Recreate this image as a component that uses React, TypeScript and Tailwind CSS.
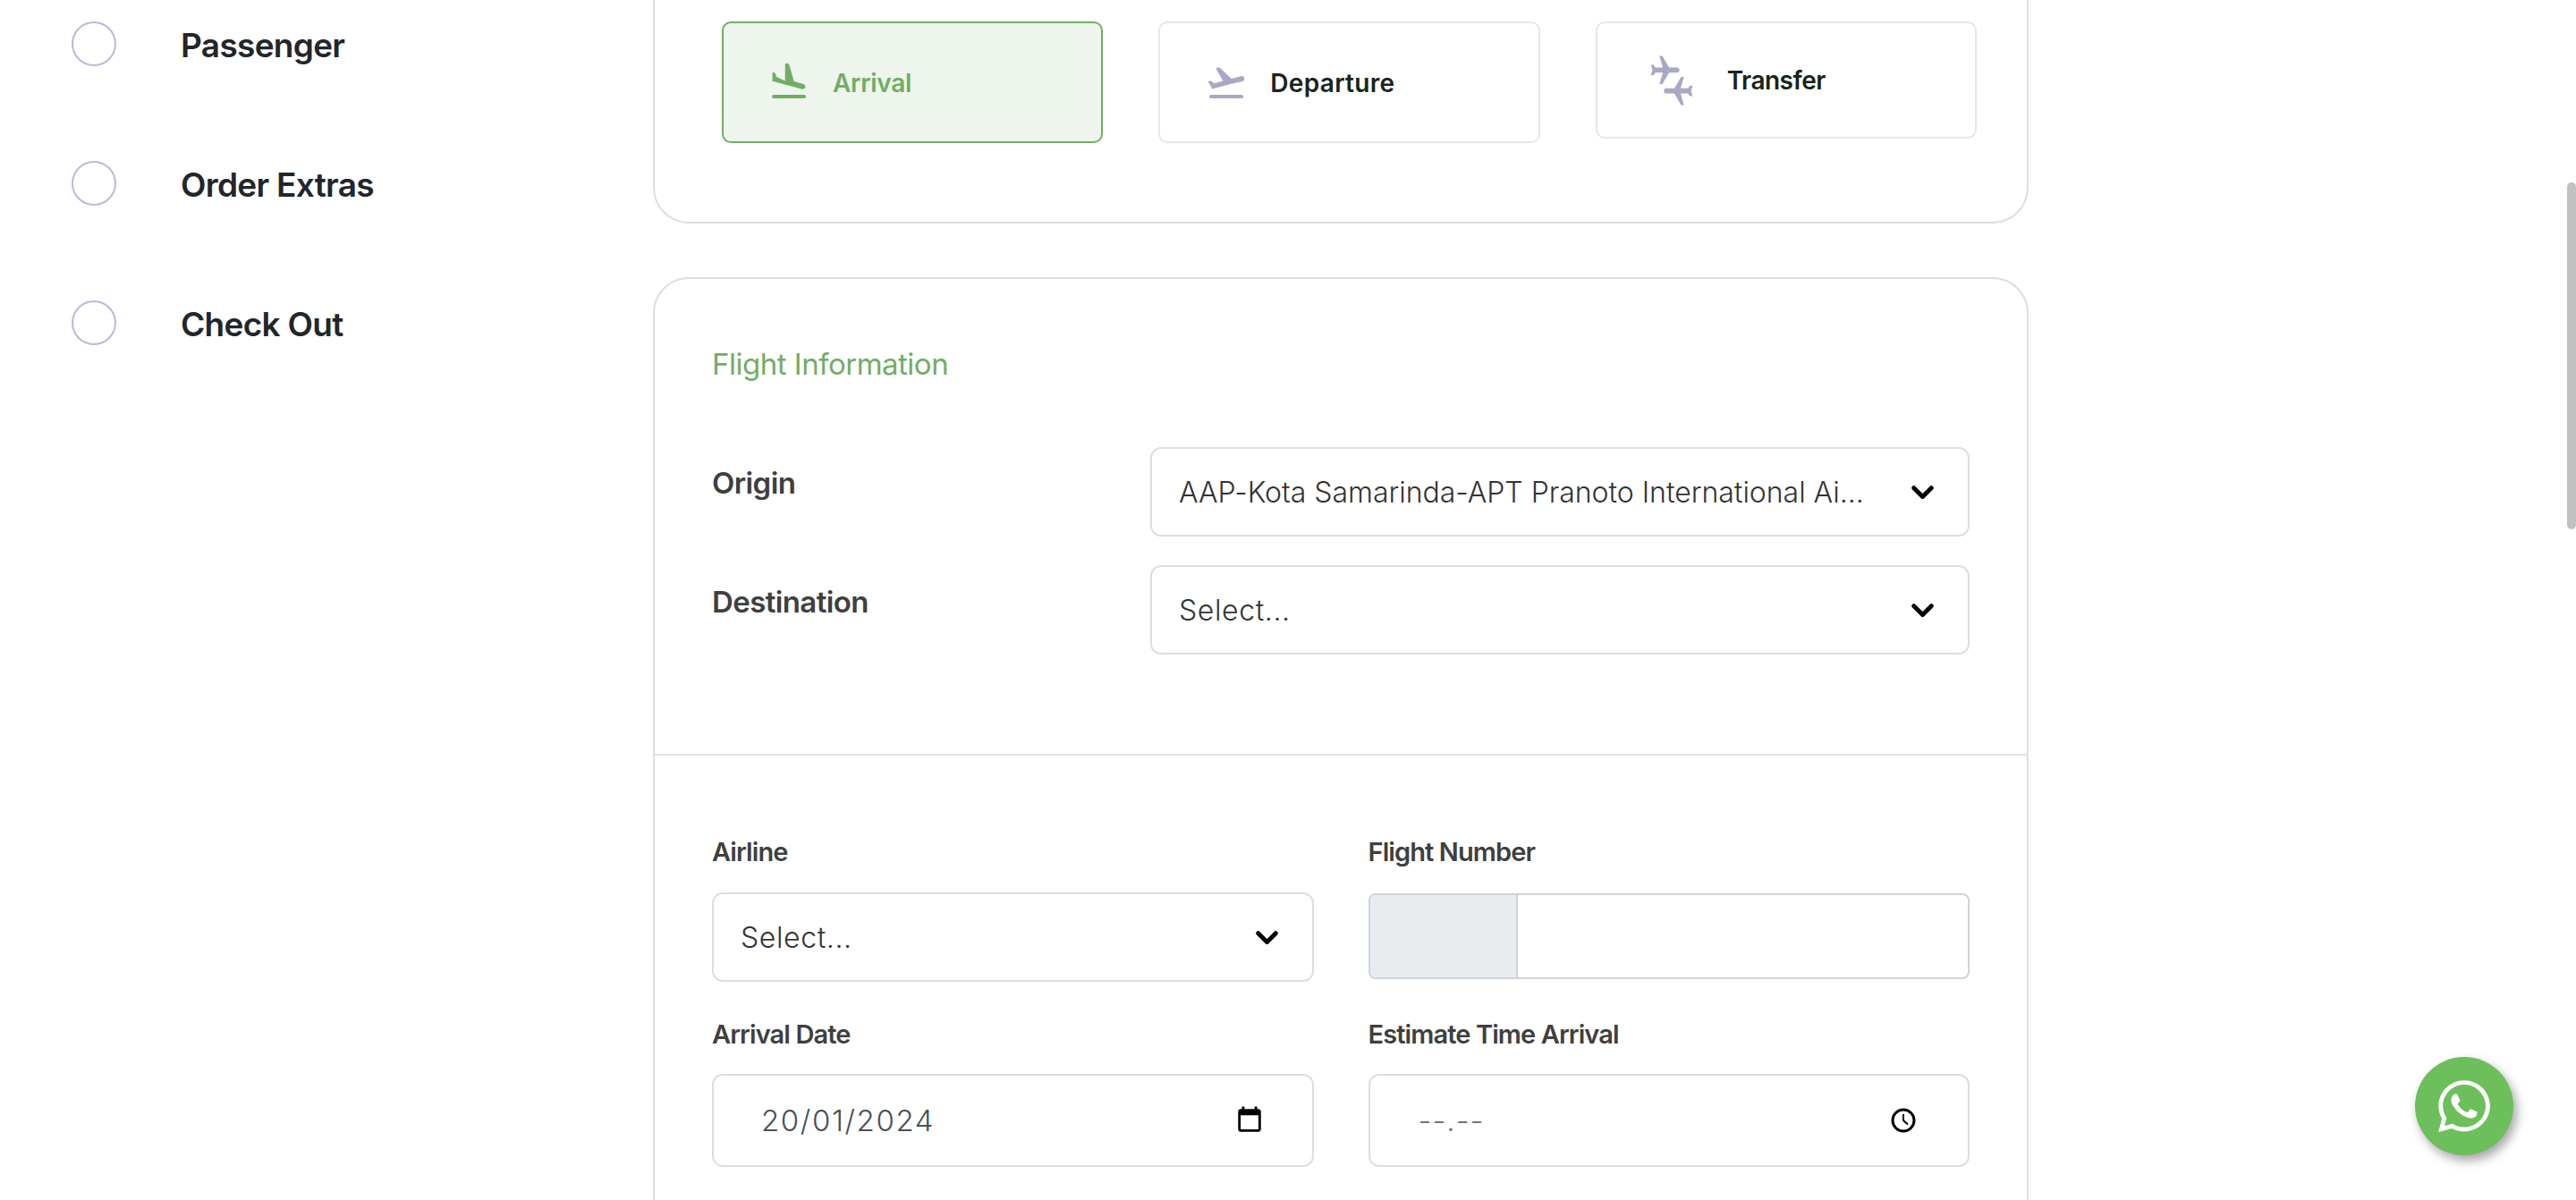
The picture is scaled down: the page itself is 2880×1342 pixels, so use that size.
import { FaWhatsapp } from 'react-icons/fa'
import { MdConnectingAirports } from 'react-icons/md'

const steps = ['Passenger', 'Order Extras', 'Check Out']

function Chevron() {
  return (
    <svg className="mt-[2px] w-[25px] h-[16px] text-black shrink-0" viewBox="0 0 28 18" fill="none" stroke="currentColor" strokeWidth={5.5} strokeLinecap="round" strokeLinejoin="round">
      <path d="M3 3l11 11L25 3" />
    </svg>
  )
}

function SelectBox({ value, tracking }: { value: string; tracking: string }) {
  return (
    <div className="flex items-center justify-between h-[100px] bg-white border-2 border-[#dedede] rounded-[12px] pl-[30px] pr-[38px]">
      <span className={`mt-[2px] text-[32px] font-light text-[#333] whitespace-nowrap ${tracking}`}>{value}</span>
      <Chevron />
    </div>
  )
}

function FieldLabel({ text }: { text: string }) {
  return <div className="h-[40px] text-[29px] leading-[40px] font-semibold text-[#3f3f3f] tracking-[-0.9px]">{text}</div>
}

export default function App() {
  return (
    <div className="relative flex w-[2880px] h-[1342px] overflow-hidden bg-white font-['Inter',sans-serif]">
      {/* Steps */}
      <aside className="w-[730px] shrink-0 pl-[80px] pt-[24px] flex flex-col gap-[106px]">
        {steps.map((s) => (
          <div key={s} className="flex items-center gap-[72px] h-[50px]">
            <div className="w-[50px] h-[50px] rounded-full border-2 border-[#b9b9dc] shrink-0"></div>
            <span className="mt-[4px] text-[37px] font-semibold text-[#22262b] tracking-[-0.7px] whitespace-nowrap">{s}</span>
          </div>
        ))}
      </aside>

      <main className="w-[1538px] shrink-0">
        {/* Transfer type */}
        <section className="h-[250px] border-2 border-t-0 border-[#dedede] rounded-b-[40px] pt-[24px] pl-[75px] pr-[56px] grid grid-cols-3 items-start gap-x-[62px]">
          <div className="h-[136px] flex items-center pl-[49px] gap-[25px] bg-[#edf5ed] border-2 border-[#72ad65] rounded-[10px]">
            <svg className="w-[48px] h-[48px] text-[#72ad65] shrink-0" viewBox="0 0 24 24" fill="currentColor">
              <path d="M3.5 19h17c.55 0 1 .45 1 1s-.45 1-1 1h-17c-.55 0-1-.45-1-1s.45-1 1-1zm6.18-5.73l4.35 1.16 5.31 1.42c.8.21 1.62-.26 1.84-1.06.21-.8-.26-1.62-1.06-1.84l-5.31-1.42-2.4-8.7c-.2-.7-.7-1.2-1.3-1.4-.7-.2-1.25.3-1.25 1v8.85L5.15 8.95l-.7-1.75c-.1-.3-.3-.5-.6-.6l-.5-.13c-.5-.1-.58.2-.58.6v4.3l1.6.43 5.31 1.47z" />
            </svg>
            <span className="mt-[1px] text-[28px] font-semibold text-[#72ad65] tracking-[-0.3px]">Arrival</span>
          </div>
          <div className="h-[136px] flex items-center pl-[50px] gap-[25px] bg-white border-2 border-[#e6e6f0] rounded-[10px]">
            <svg className="w-[48px] h-[48px] text-[#a8a8c4] shrink-0" viewBox="0 0 24 24" fill="currentColor">
              <path d="M3.5 19h17c.55 0 1 .45 1 1s-.45 1-1 1h-17c-.55 0-1-.45-1-1s.45-1 1-1zm18.57-9.36c-.21-.8-1.04-1.28-1.84-1.06L14.92 10 8.6 4.1c-.4-.4-.9-.6-1.5-.45-.6.2-.85.75-.55 1.3l3.66 6.29-4.97 1.33-1.4-1.1c-.3-.2-.6-.3-.9-.2l-.5.15c-.4.1-.5.4-.3.7l2.1 3.6 1.6-.43 5.31-1.42 4.35-1.16L21 11.49c.81-.23 1.28-1.05 1.07-1.85z" />
            </svg>
            <span className="mt-[1px] text-[28px] font-semibold text-[#17251a] tracking-[0.3px]">Departure</span>
          </div>
          <div className="h-[131px] flex items-center pl-[48px] gap-[27px] bg-white border-2 border-[#e6e6f0] rounded-[10px]">
            <MdConnectingAirports className="text-[#a8a8c4] shrink-0 w-[70px] h-[70px]" />
            <span className="text-[28px] font-semibold text-[#17251a] tracking-[-0.5px]">Transfer</span>
          </div>
        </section>

        {/* Flight information */}
        <section className="mt-[60px] border-2 border-[#dedede] rounded-[40px] h-[1100px]">
          <div className="px-[64px] pt-[70px] h-[533px] border-b-2 border-[#e2e2e2]">
            <h2 className="h-[50px] text-[33px] leading-[50px] font-normal text-[#72ad65] tracking-[-0.5px]">Flight Information</h2>
            <div className="mt-[68px] flex flex-col gap-[32px]">
              <div className="flex">
                <div className="w-[490px] pt-[20px] text-[33px] leading-[40px] font-semibold text-[#3f3f3f] tracking-[-0.6px]">Origin</div>
                <div className="flex-1"><SelectBox value="AAP-Kota Samarinda-APT Pranoto International Ai..." tracking="tracking-[-0.02px]" /></div>
              </div>
              <div className="flex">
                <div className="w-[490px] pt-[21px] text-[33px] leading-[40px] font-semibold text-[#3f3f3f] tracking-[-0.6px]">Destination</div>
                <div className="flex-1"><SelectBox value="Select..." tracking="tracking-[0.6px]" /></div>
              </div>
            </div>
          </div>

          <div className="px-[64px] pt-[88px] grid grid-cols-2 gap-x-[61px] gap-y-[39px]">
            <div>
              <FieldLabel text="Airline" />
              <div className="mt-[25px]"><SelectBox value="Select..." tracking="tracking-[0.6px]" /></div>
            </div>
            <div>
              <FieldLabel text="Flight Number" />
              <div className="mt-[26px] flex h-[96px] border-2 border-[#ced4da] rounded-[8px] overflow-hidden bg-white">
                <div className="w-[165px] bg-[#e9ecef] border-r-2 border-[#ced4da]"></div>
                <div className="flex-1"></div>
              </div>
            </div>
            <div>
              <FieldLabel text="Arrival Date" />
              <div className="mt-[24px] flex items-center justify-between h-[104px] border-2 border-[#dedede] rounded-[12px] pl-[53px] pr-[53px]">
                <span className="mt-[2px] text-[33px] font-light text-[#495057] tracking-[1.6px]">20/01/2024</span>
                <svg className="w-[34px] h-[34px] text-black" viewBox="0 0 24 24" fill="currentColor">
                  <path d="M19 3h-1V1h-2v2H8V1H6v2H5c-1.1 0-2 .9-2 2v14c0 1.1.9 2 2 2h14c1.1 0 2-.9 2-2V5c0-1.1-.9-2-2-2zm0 16H5V8h14v11z" />
                </svg>
              </div>
            </div>
            <div>
              <FieldLabel text="Estimate Time Arrival" />
              <div className="mt-[24px] flex items-center justify-between h-[104px] border-2 border-[#dedede] rounded-[12px] pl-[54px] pr-[58px]">
                <span className="mt-[2px] text-[33px] font-light text-[#6c757d] tracking-[1px]">--.--</span>
                <svg className="w-[28px] h-[28px] text-black" viewBox="0 0 28 28" fill="none" stroke="currentColor" strokeWidth={3}>
                  <circle cx="14" cy="14" r="12" />
                  <path d="M14 7v7l5 4.5" strokeWidth={2} />
                </svg>
              </div>
            </div>
          </div>
        </section>
      </main>

      {/* WhatsApp button */}
      <button className="absolute left-[2700px] top-[1182px] w-[110px] h-[110px] rounded-full bg-[#6dbf5b] flex items-center justify-center shadow-[4px_6px_12px_rgba(0,0,0,0.35)]">
        <FaWhatsapp className="w-[66px] h-[66px] text-white" />
      </button>

      {/* Scrollbar */}
      <div className="absolute right-0 top-[204px] w-[10px] h-[388px] rounded-full bg-[#c1c1c1]"></div>
    </div>
  )
}
